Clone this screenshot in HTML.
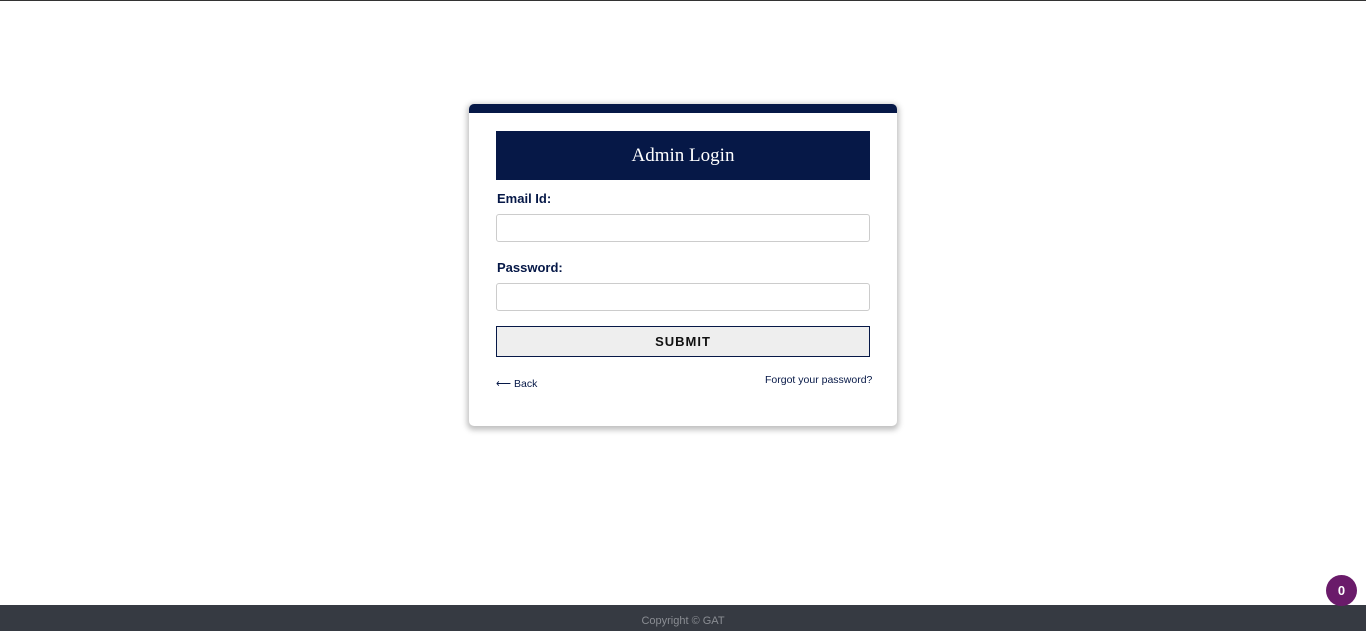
<!DOCTYPE html>
<html><head><style>
body{margin:0;width:1366px;height:631px;background:#fff;position:relative;overflow:hidden;font-family:"Liberation Sans",sans-serif}
.tl{position:absolute;left:0;top:0;width:1366px;height:1px;background:#333}
.card{position:absolute;left:469px;top:104px;width:428px;height:322px;background:#fff;border-radius:5px;box-shadow:0 2px 6px 2px rgba(0,0,0,.25);border-top:9px solid #061847;box-sizing:border-box}
.hd{position:absolute;left:27px;top:18px;width:374px;height:49px;background:#061847;color:#fff;font-family:"Liberation Serif",serif;font-size:19px;text-align:center;line-height:49px}
.lb{position:absolute;left:28px;font-size:13px;font-weight:bold;color:#061847}
.in{position:absolute;left:27px;width:374px;height:28px;border:1px solid #ccc;border-radius:3px;box-sizing:border-box}
.bt{position:absolute;left:27px;top:213px;width:374px;height:31px;border:1px solid #061847;background:#eee;box-sizing:border-box;text-align:center;line-height:29px;font-weight:bold;font-size:13px;letter-spacing:1px;color:#111}
.sm{position:absolute;font-size:10.5px;color:#061847}
.ft{position:absolute;left:0;top:605px;width:1366px;height:26px;background:#363a42;color:#8a8d93;font-size:11px;text-align:center;line-height:32px}
.bd{position:absolute;left:1326px;top:575px;width:31px;height:31px;border-radius:50%;background:#6a1b6a;color:#fff;font-weight:bold;font-size:13px;text-align:center;line-height:31px}
</style></head><body>
<div class="tl"></div>
<div class="card">
<div class="hd">Admin Login</div>
<div class="lb" style="top:78px">Email Id:</div>
<div class="in" style="top:101px"></div>
<div class="lb" style="top:147px">Password:</div>
<div class="in" style="top:170px"></div>
<div class="bt">SUBMIT</div>
<div class="sm" style="left:27px;top:265px">&#x27F5; Back</div>
<div class="sm" style="left:296px;top:261px">Forgot your password?</div>
</div>
<div class="ft">Copyright © GAT</div>
<div class="bd">0</div>
</body></html>
